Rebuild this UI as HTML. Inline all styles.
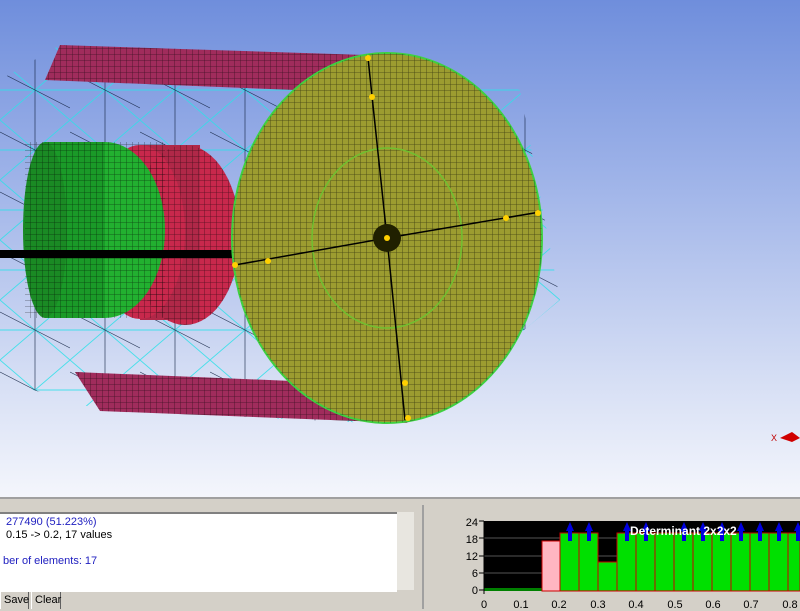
<!DOCTYPE html>
<html><head><style>
body{margin:0;width:800px;height:609px;overflow:hidden;font-family:"Liberation Sans",sans-serif;position:relative;background:#d4d0c8}
#view{position:absolute;left:0;top:0;width:800px;height:497px;background:linear-gradient(#6f8edc 0%,#9db2e8 35%,#d4ddf4 75%,#f4f6fc 100%)}
.panel{position:absolute;top:497px;left:0;width:800px;height:112px;background:#d4d0c8;border-top:2px solid #a0a0a0}
.txt{position:absolute;left:0;top:512px;width:391px;height:74px;background:#fff;border-top:2px solid #808080;font-size:11px;line-height:13px;padding:2px 3px}
.sb{position:absolute;left:397px;top:512px;width:17px;height:78px;background:#e8e6e0}
.btn{position:absolute;top:592px;height:17px;font-size:11px;background:#d4d0c8;border-right:1px solid #606060;border-left:1px solid #fff;padding:2px 3px;box-sizing:border-box}
</style></head><body>
<div id="view">
<svg width="800" height="497" viewBox="0 0 800 497">
<defs>
<pattern id="m" width="6" height="6" patternUnits="userSpaceOnUse"><path d="M0 0H6M0 0V6" stroke="#000" stroke-width="0.8" opacity="0.6"/></pattern>
<pattern id="w" width="70" height="60" patternUnits="userSpaceOnUse"><path d="M0 0L70 60M70 0L0 60M0 30H70" stroke="#2ee0e8" stroke-width="0.9"/><path d="M35 0V60M0 12L70 48" stroke="#102040" stroke-width="0.7"/></pattern>
</defs>
<path d="M0 80 L60 45 L365 55 L520 90 L560 300 L410 425 L100 410 L0 380 Z" fill="url(#w)" opacity="0.85"/>
<polygon points="60,45 365,55 345,92 45,80" fill="#a02c5c"/>
<polygon points="60,45 365,55 345,92 45,80" fill="url(#m)"/>
<polygon points="75,372 292,381 408,423 100,411" fill="#a02c5c"/>
<polygon points="75,372 292,381 408,423 100,411" fill="url(#m)"/>
<ellipse cx="185" cy="235" rx="55" ry="90" fill="#c8284c"/>
<rect x="140" y="145" width="60" height="175" fill="#b02848"/>
<ellipse cx="140" cy="232" rx="45" ry="87" fill="#c8284c"/>
<ellipse cx="185" cy="235" rx="55" ry="90" fill="url(#m)"/>
<ellipse cx="105" cy="230" rx="60" ry="88" fill="#22b030"/>
<rect x="45" y="142" width="60" height="176" fill="#1a9a28"/>
<ellipse cx="45" cy="230" rx="22" ry="88" fill="#1a8a24"/>
<rect x="25" y="142" width="140" height="176" fill="url(#m)"/>
<rect x="0" y="250" width="245" height="8" fill="#000"/>
<ellipse cx="387" cy="238" rx="155" ry="185" fill="#9c9c30" stroke="#40d040" stroke-width="2"/>
<ellipse cx="387" cy="238" rx="155" ry="185" fill="url(#m)"/>
<ellipse cx="387" cy="238" rx="75" ry="90" fill="none" stroke="#70c030" stroke-width="1.5"/>
<g stroke="#000" stroke-width="1.5"><path d="M387 238L368 58M387 238L540 212M387 238L405 420M387 238L235 265"/></g>
<circle cx="387" cy="238" r="14" fill="#202000"/>
<circle cx="387" cy="238" r="3" fill="#ffd000"/>
<g fill="#ffd000"><circle cx="368" cy="58" r="3"/><circle cx="372" cy="97" r="3"/><circle cx="538" cy="213" r="3"/><circle cx="506" cy="218" r="3"/><circle cx="405" cy="383" r="3"/><circle cx="408" cy="418" r="3"/><circle cx="235" cy="265" r="3"/><circle cx="268" cy="261" r="3"/></g>
<text x="771" y="441" font-size="9" fill="#c00000" font-family="Liberation Sans">X</text>
<path d="M780 438 L792 432 L800 438 L792 442 Z" fill="#d00000"/>
</svg>
</div>
<div class="panel"></div>
<div class="txt"><span style="color:#2020c0">&nbsp;277490 (51.223%)</span><br>&nbsp;0.15 -&gt; 0.2, 17 values<br><br><span style="color:#2020c0">ber of elements: 17</span></div>
<div class="sb"></div>
<div class="btn" style="left:0;width:29px">Save</div>
<div class="btn" style="left:31px;width:30px">Clear</div>
<div style="position:absolute;left:422px;top:505px;width:2px;height:104px;background:#a0a0a0"></div>
<svg style="position:absolute;left:440px;top:510px" width="360" height="99">
<rect x="44" y="11" width="316" height="70" fill="#000"/>
<g stroke="#555" stroke-width="1"><path d="M44 28H360M44 46H360M44 63H360"/></g>
<rect x="44" y="78" width="58" height="3" fill="#008000"/>
<rect x="102" y="31" width="18" height="50" fill="#ffb6c1" stroke="#c00" stroke-width="1"/>
<g fill="#00e000" stroke="#c00" stroke-width="1">
<rect x="120" y="23" width="19" height="58"/><rect x="139" y="23" width="19" height="58"/>
<rect x="158" y="52" width="19" height="29"/>
<rect x="177" y="23" width="183" height="58"/>
</g>
<g stroke="#c00"><path d="M196 23V81M215 23V81M234 23V81M253 23V81M272 23V81M291 23V81M310 23V81M329 23V81M348 23V81"/></g>
<g fill="#0000e0"><path d="M126 21l4-9 4 9h-2v10h-4v-10z"/><path d="M145 21l4-9 4 9h-2v10h-4v-10z"/><path d="M183 21l4-9 4 9h-2v10h-4v-10z"/><path d="M202 21l4-9 4 9h-2v10h-4v-10z"/><path d="M240 21l4-9 4 9h-2v10h-4v-10z"/><path d="M259 21l4-9 4 9h-2v10h-4v-10z"/><path d="M278 21l4-9 4 9h-2v10h-4v-10z"/><path d="M297 21l4-9 4 9h-2v10h-4v-10z"/><path d="M316 21l4-9 4 9h-2v10h-4v-10z"/><path d="M335 21l4-9 4 9h-2v10h-4v-10z"/><path d="M354 21l4-9 4 9h-2v10h-4v-10z"/></g>
<text x="190" y="25" font-size="12" font-weight="bold" fill="#fff" font-family="Liberation Sans">Determinant 2x2x2</text>
<g font-size="11" fill="#000" font-family="Liberation Sans" text-anchor="end"><text x="38" y="16">24</text><text x="38" y="33">18</text><text x="38" y="50">12</text><text x="38" y="67">6</text><text x="38" y="84">0</text></g>
<g stroke="#000"><path d="M39 11H44M39 28H44M39 46H44M39 63H44M39 80H44M44 11V84"/></g>
<g font-size="11" fill="#000" font-family="Liberation Sans" text-anchor="middle"><text x="44" y="98">0</text><text x="81" y="98">0.1</text><text x="119" y="98">0.2</text><text x="158" y="98">0.3</text><text x="196" y="98">0.4</text><text x="235" y="98">0.5</text><text x="273" y="98">0.6</text><text x="311" y="98">0.7</text><text x="350" y="98">0.8</text></g>
</svg>
</body></html>
